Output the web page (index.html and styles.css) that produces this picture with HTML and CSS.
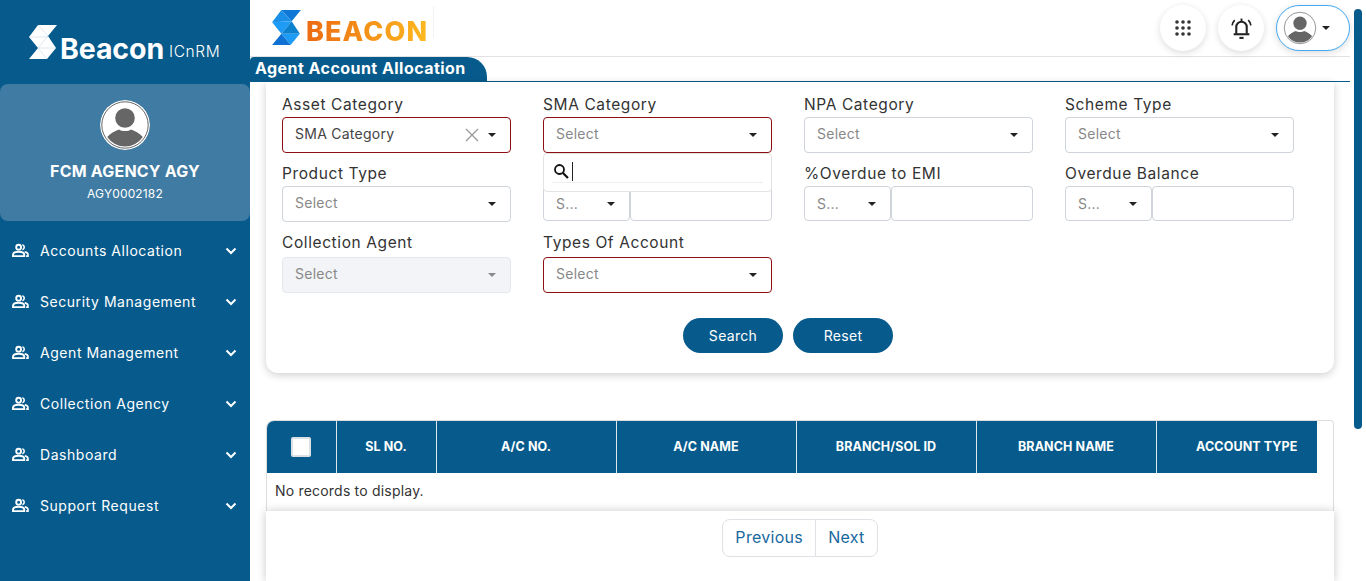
FILE: index.html
```html
<!DOCTYPE html>
<html lang="en">

<head>
    <meta charset="UTF-8">
    <title>Agent Account Allocation</title>
    <link rel="stylesheet" href="styles.css">
</head>

<body>
    <svg class="defs" width="0" height="0">
        <symbol id="avatar" viewBox="0 0 50 50">
            <circle cx="25" cy="25" r="25" fill="#fff"/>
            <circle cx="25" cy="25" r="23.200" fill="#fff" stroke="#666" stroke-width="1"/>
            <circle cx="25" cy="18" r="9.800" fill="#666"/>
            <path d="M7.200 37C11 33 15 31 19 29.500 22 31.500 28 31.500 31 29.500 35 31 39 33 42.800 37A21.500 21.500 0 0 1 7.200 37z" fill="#666"/>
        </symbol>
        <symbol id="people" viewBox="0 0 18 16">
            <circle cx="7" cy="4.500" r="2.600" fill="none" stroke="#fff" stroke-width="2"/>
            <path d="M1 14v-1.500c0-2 2.500-3.200 6-3.200s6 1.200 6 3.200V14z" fill="none" stroke="#fff" stroke-width="2"/>
            <path d="M11 1.900a2.700 2.700 0 0 1 0 5.200M13.500 9.500c2 .4 3.500 1.400 3.500 3V14h-2" fill="none" stroke="#fff" stroke-width="1.700"/>
        </symbol>
        <symbol id="chevron" viewBox="0 0 12 8">
            <path d="M1.500 1.500 6 6l4.500-4.500" fill="none" stroke="#fff" stroke-width="2"/>
        </symbol>
    </svg>

    <aside class="sidebar">
        <div class="side-logo">
            <svg class="side-mark" viewBox="0 0 28 34">
                <polygon points="9,0 28,0 19,11 27,23 18,34 0,34 9,23 0,12" fill="#fff"/>
                <path d="M9 0l10 11L9 23l9 11M0 12h19M9 23h18" fill="none" stroke="#c5d6e2" stroke-width=".6"/>
            </svg>
            <span class="side-brand">Beacon</span>
            <span class="side-product">ICnRM</span>
        </div>
        <div class="profile">
            <svg class="profile-pic"><use href="#avatar"/></svg>
            <div class="profile-name">FCM AGENCY AGY</div>
            <div class="profile-id">AGY0002182</div>
        </div>
        <ul class="nav">
            <li><svg class="nav-icon"><use href="#people"/></svg><span>Accounts Allocation</span><svg class="nav-arrow"><use href="#chevron"/></svg></li>
            <li><svg class="nav-icon"><use href="#people"/></svg><span>Security Management</span><svg class="nav-arrow"><use href="#chevron"/></svg></li>
            <li><svg class="nav-icon"><use href="#people"/></svg><span>Agent Management</span><svg class="nav-arrow"><use href="#chevron"/></svg></li>
            <li><svg class="nav-icon"><use href="#people"/></svg><span>Collection Agency</span><svg class="nav-arrow"><use href="#chevron"/></svg></li>
            <li><svg class="nav-icon"><use href="#people"/></svg><span>Dashboard</span><svg class="nav-arrow"><use href="#chevron"/></svg></li>
            <li><svg class="nav-icon"><use href="#people"/></svg><span>Support Request</span><svg class="nav-arrow"><use href="#chevron"/></svg></li>
        </ul>
    </aside>

    <main class="main">
        <header class="topbar">
            <div class="top-logo">
                <svg class="top-mark" viewBox="0 0 28 34">
                    <polygon points="9,0 28,0 19,11" fill="#0f78d6"/>
                    <polygon points="9,0 19,11 0,12" fill="#1a8fe8"/>
                    <polygon points="0,12 19,11 9,23" fill="#1e9bf5"/>
                    <polygon points="19,11 27,23 9,23" fill="#0c82cf"/>
                    <polygon points="9,23 27,23 18,34" fill="#1e9bf5"/>
                    <polygon points="9,23 18,34 0,34" fill="#0f72d2"/>
                </svg>
                <span class="top-brand">BEACON</span>
            </div>
            <div class="top-actions">
                <button class="round-btn">
                    <svg class="grid-icon" viewBox="0 0 16 16" fill="#333">
                        <circle cx="2" cy="2" r="1.800"/><circle cx="8" cy="2" r="1.800"/><circle cx="14" cy="2" r="1.800"/>
                        <circle cx="2" cy="8" r="1.800"/><circle cx="8" cy="8" r="1.800"/><circle cx="14" cy="8" r="1.800"/>
                        <circle cx="2" cy="14" r="1.800"/><circle cx="8" cy="14" r="1.800"/><circle cx="14" cy="14" r="1.800"/>
                    </svg>
                </button>
                <button class="round-btn">
                    <svg class="bell-icon" viewBox="0 0 22 22" fill="none" stroke="#222">
                        <path d="M6 16V9.500a5 5 0 0 1 10 0V16" stroke-width="2"/>
                        <path d="M3.500 16.500h15" stroke-width="2"/>
                        <path d="M9 20h4" stroke-width="2"/>
                        <path d="M11 1.500v3" stroke-width="1.800"/>
                        <path d="M4.500 3A9 9 0 0 0 2 8M17.500 3A9 9 0 0 1 20 8" stroke-width="1.600"/>
                    </svg>
                </button>
                <button class="user-btn">
                    <svg class="user-pic"><use href="#avatar"/></svg>
                    <i class="caret"></i>
                </button>
            </div>
        </header>

        <div class="title-bar">
            <h1 class="title-tab">Agent Account Allocation</h1>
        </div>

        <section class="filter-card">
            <div class="filter-grid">
                <div class="field">
                    <label>Asset Category</label>
                    <div class="select invalid"><span class="value">SMA Category</span>
                        <svg class="clear" viewBox="0 0 14 14"><path d="M1 1l12 12M13 1 1 13" stroke="#999" stroke-width="1.300"/></svg>
                        <i class="caret"></i>
                    </div>
                </div>
                <div class="field">
                    <label>SMA Category</label>
                    <div class="select invalid"><span class="placeholder">Select</span><i class="caret"></i></div>
                    <div class="dropdown">
                        <div class="dropdown-search">
                            <svg class="search-icon" viewBox="0 0 16 16" fill="none" stroke="#111"><circle cx="6.500" cy="6.500" r="4.500" stroke-width="1.800"/><path d="M10 10l5 5" stroke-width="2.200"/></svg>
                            <span class="cursor"></span>
                        </div>
                    </div>
                </div>
                <div class="field">
                    <label>NPA Category</label>
                    <div class="select"><span class="placeholder">Select</span><i class="caret"></i></div>
                </div>
                <div class="field">
                    <label>Scheme Type</label>
                    <div class="select"><span class="placeholder">Select</span><i class="caret"></i></div>
                </div>

                <div class="field">
                    <label>Product Type</label>
                    <div class="select"><span class="placeholder">Select</span><i class="caret"></i></div>
                </div>
                <div class="field">
                    <label>&nbsp;</label>
                    <div class="combo">
                        <div class="select"><span class="placeholder">S...</span><i class="caret"></i></div>
                        <div class="text-input"></div>
                    </div>
                </div>
                <div class="field">
                    <label>%Overdue to EMI</label>
                    <div class="combo">
                        <div class="select"><span class="placeholder">S...</span><i class="caret"></i></div>
                        <div class="text-input"></div>
                    </div>
                </div>
                <div class="field">
                    <label>Overdue Balance</label>
                    <div class="combo">
                        <div class="select"><span class="placeholder">S...</span><i class="caret"></i></div>
                        <div class="text-input"></div>
                    </div>
                </div>

                <div class="field last-row">
                    <label>Collection Agent</label>
                    <div class="select disabled"><span class="placeholder">Select</span><i class="caret"></i></div>
                </div>
                <div class="field last-row">
                    <label>Types Of Account</label>
                    <div class="select invalid"><span class="placeholder">Select</span><i class="caret"></i></div>
                </div>
            </div>
            <div class="filter-actions">
                <button class="pill-btn">Search</button>
                <button class="pill-btn">Reset</button>
            </div>
        </section>

        <section class="table-wrap">
            <table class="grid-table">
                <thead>
                    <tr>
                        <th class="col-check"><span class="checkbox"></span></th>
                        <th class="col-sl">SL NO.</th>
                        <th class="col-wide">A/C NO.</th>
                        <th class="col-wide">A/C NAME</th>
                        <th class="col-wide">BRANCH/SOL ID</th>
                        <th class="col-wide">BRANCH NAME</th>
                        <th class="col-type">ACCOUNT TYPE</th>
                    </tr>
                </thead>
            </table>
            <div class="no-records">No records to display.</div>
        </section>

        <section class="pager-panel">
            <div class="pager">
                <a class="pager-btn">Previous</a>
                <a class="pager-btn">Next</a>
            </div>
        </section>
    </main>

    <div class="scroll-thumb"></div>
</body>

</html>
```

FILE: styles.css
```css
* {
    margin: 0;
    padding: 0;
    box-sizing: border-box;
}

html,
body {
    height: 100%;
    overflow: hidden;
}

body {
    display: flex;
    font-family: "Inter", "Liberation Sans", sans-serif;
    background: #fff;
    color: #333;
}

.defs {
    position: absolute;
}

/* sidebar */
.sidebar {
    width: 250px;
    height: 581px;
    flex-shrink: 0;
    background: #075b8c;
    color: #fff;
}

.side-logo {
    height: 84px;
    padding: 25px 0 0 29px;
    display: flex;
    align-items: flex-start;
}

.side-mark {
    width: 28px;
    height: 34px;
    flex-shrink: 0;
}

.side-brand {
    margin: 9px 0 0 3px;
    font-size: 28.500px;
    line-height: 30px;
    font-weight: 700;
    letter-spacing: -.1px;
}

.side-product {
    margin: 18px 0 0 5px;
    font-size: 15.500px;
    line-height: 18px;
    letter-spacing: .6px;
    font-weight: 300;
}

.profile {
    height: 137px;
    padding-top: 16px;
    background: #3f7ba3;
    border-radius: 8px;
    text-align: center;
}

.profile-pic {
    display: block;
    width: 50px;
    height: 50px;
    margin: 0 auto;
    border-radius: 50%;
}

.profile-name {
    margin-top: 11px;
    font-size: 16px;
    line-height: 20px;
    font-weight: 700;
    letter-spacing: .2px;
}

.profile-id {
    margin-top: 5px;
    font-size: 12px;
    line-height: 16px;
    letter-spacing: .15px;
}

.nav {
    list-style: none;
    margin-top: 4px;
}

.nav li {
    height: 51px;
    padding: 0 13px 0 12px;
    display: flex;
    align-items: center;
    font-size: 14px;
    letter-spacing: .55px;
}

.nav-icon {
    width: 17px;
    height: 15px;
    margin-right: 11px;
}

.nav li span {
    flex: 1;
}

.nav-arrow {
    width: 12px;
    height: 8px;
}

/* header */
.main {
    width: 1100px;
    flex-shrink: 0;
}

.topbar {
    height: 57px;
    padding: 5px 0 0 22px;
    border-bottom: 1px solid #e2e2e2;
    display: flex;
    justify-content: space-between;
    align-items: flex-start;
}

.top-logo {
    position: relative;
    width: 162px;
    height: 34px;
    margin-top: 5px;
    display: flex;
    align-items: center;
}

.top-logo::after {
    content: "";
    position: absolute;
    right: 0;
    top: -4px;
    width: 1px;
    height: 32px;
    background: #f2f2f2;
}

.top-mark {
    width: 29px;
    height: 35px;
    flex-shrink: 0;
}

.top-brand {
    margin: 10px 0 0 5px;
    font-size: 27px;
    line-height: 30px;
    font-weight: 800;
    letter-spacing: 1.100px;
    background: linear-gradient(90deg, #ec6a12, #fdb91f);
    -webkit-background-clip: text;
    background-clip: text;
    color: transparent;
}

.top-actions {
    display: flex;
    gap: 12px;
}

.round-btn {
    width: 46px;
    height: 46px;
    border: 0;
    border-radius: 50%;
    background: #fff;
    box-shadow: 0 2px 7px rgba(0, 0, 0, .14);
    display: flex;
    align-items: center;
    justify-content: center;
}

.grid-icon {
    width: 16px;
    height: 16px;
}

.bell-icon {
    width: 23px;
    height: 23px;
}

.user-btn {
    width: 74px;
    height: 46px;
    padding-left: 6px;
    border: 1px solid #3fa9f5;
    border-radius: 23px;
    background: #fff;
    box-shadow: 0 2px 7px rgba(0, 0, 0, .14);
    display: flex;
    align-items: center;
    gap: 4px;
}

.user-pic {
    width: 34px;
    height: 34px;
}

.user-btn .caret {
    margin: 0 0 0 1px;
}

.title-bar {
    height: 25px;
    border-bottom: 1px solid #075b8c;
}

.title-tab {
    width: 237px;
    height: 24px;
    padding-left: 5px;
    background: #075b8c;
    border-radius: 4px 20px 0 0;
    color: #fff;
    font-size: 16px;
    line-height: 23px;
    font-weight: 700;
    letter-spacing: .45px;
    white-space: nowrap;
}

/* filter form */
.filter-card {
    height: 291px;
    margin: 0 16px;
    padding: 13px 16px 0;
    background: #fff;
    border-radius: 0 0 12px 12px;
    box-shadow: 0 2px 8px rgba(0, 0, 0, .2);
}

.filter-grid {
    display: grid;
    grid-template-columns: repeat(4, 261px);
    row-gap: 11px;
}

.field {
    position: relative;
    width: 229px;
}

.field label {
    display: block;
    height: 22px;
    font-size: 15.500px;
    line-height: 19px;
    letter-spacing: .6px;
}

.last-row label {
    height: 24px;
}

.select {
    position: relative;
    height: 36px;
    padding: 0 30px 2px 12px;
    border: 1px solid #ced4da;
    border-radius: 4px;
    background: #fff;
    display: flex;
    align-items: center;
    font-size: 14px;
    letter-spacing: .25px;
    line-height: 30px;
    overflow: hidden;
}

.select.invalid {
    border-color: #8c0f14;
}

.select.disabled {
    background: #f2f4f7;
    border-color: #e4e7ec;
}

.select.disabled .caret {
    border-top-color: #888;
}

.placeholder {
    color: #888;
}

.value {
    color: #444;
}

.clear {
    position: absolute;
    right: 31px;
    top: 10px;
    width: 14px;
    height: 14px;
}

.caret {
    display: block;
    width: 0;
    height: 0;
    border-left: 4.500px solid transparent;
    border-right: 4.500px solid transparent;
    border-top: 4.500px solid #222;
}

.select .caret {
    position: absolute;
    right: 14px;
    top: 15px;
}

.combo {
    display: flex;
    height: 35px;
}

.combo .select {
    width: 87px;
    height: 35px;
    padding-bottom: 0;
    flex-shrink: 0;
}

.text-input {
    flex: 1;
    border: 1px solid #ced4da;
    border-radius: 4px;
}

.dropdown {
    position: absolute;
    left: 0;
    top: 58px;
    width: 229px;
    height: 39px;
    padding: 0 8px;
    background: #fff;
    border: 1px solid #e3e3e3;
    border-radius: 4px;
    z-index: 2;
}

.dropdown-search {
    height: 29px;
    border-bottom: 1px solid #eee;
    display: flex;
    align-items: center;
    padding: 6px 0 0 1px;
}

.search-icon {
    width: 16px;
    height: 16px;
}

.cursor {
    width: 1px;
    height: 19px;
    margin-left: 3px;
    background: #222;
}

.filter-actions {
    margin-top: 25px;
    padding-right: 24px;
    display: flex;
    justify-content: center;
    gap: 10px;
}

.pill-btn {
    width: 100px;
    height: 35px;
    border: 0;
    border-radius: 18px;
    background: #075b8c;
    color: #fff;
    font-family: inherit;
    font-size: 14px;
    letter-spacing: .3px;
}

/* table */
.table-wrap {
    height: 91px;
    margin: 47px 16px 0;
    border: 1px solid #ddd;
    border-bottom: 0;
    border-radius: 8px 4px 0 0;
    overflow: hidden;
}

.grid-table {
    width: 1050px;
    table-layout: fixed;
    border-collapse: collapse;
}

.grid-table th {
    height: 52px;
    padding-bottom: 2px;
    background: #075b8c;
    color: #fff;
    font-size: 12.500px;
    font-weight: 700;
    letter-spacing: .1px;
    border-right: 1px solid #dfe6ea;
}

.col-check {
    width: 69px;
}

.col-sl {
    width: 100px;
}

.col-wide {
    width: 180px;
}

.grid-table th.col-type {
    width: 161px;
    padding-left: 20px;
    border-right: 0;
}

.checkbox {
    display: block;
    width: 20px;
    height: 20px;
    margin: 2px auto 0;
    background: #fff;
    border: 2px solid #dbe1e4;
    border-radius: 2px;
}

.no-records {
    padding: 9px 8px;
    font-size: 14px;
    line-height: 18px;
    letter-spacing: .2px;
}

.pager-panel {
    position: relative;
    height: 70px;
    margin: 0 16px;
    padding-top: 8px;
    background: #fff;
    box-shadow: 0 0 9px rgba(0, 0, 0, .22);
}

.pager {
    display: flex;
    justify-content: center;
}

.pager-btn {
    height: 38px;
    padding: 0 12px;
    border: 1px solid #dee2e6;
    font-size: 16px;
    line-height: 35px;
    letter-spacing: .3px;
    color: #17699e;
}

.pager-btn:first-child {
    border-radius: 8px 0 0 8px;
}

.pager-btn:last-child {
    margin-left: -1px;
    border-radius: 0 8px 8px 0;
}

/* page scrollbar */
.scroll-thumb {
    position: absolute;
    left: 1354px;
    top: 9px;
    width: 8px;
    height: 420px;
    background: #075b8c;
    border-radius: 4px;
}
```
